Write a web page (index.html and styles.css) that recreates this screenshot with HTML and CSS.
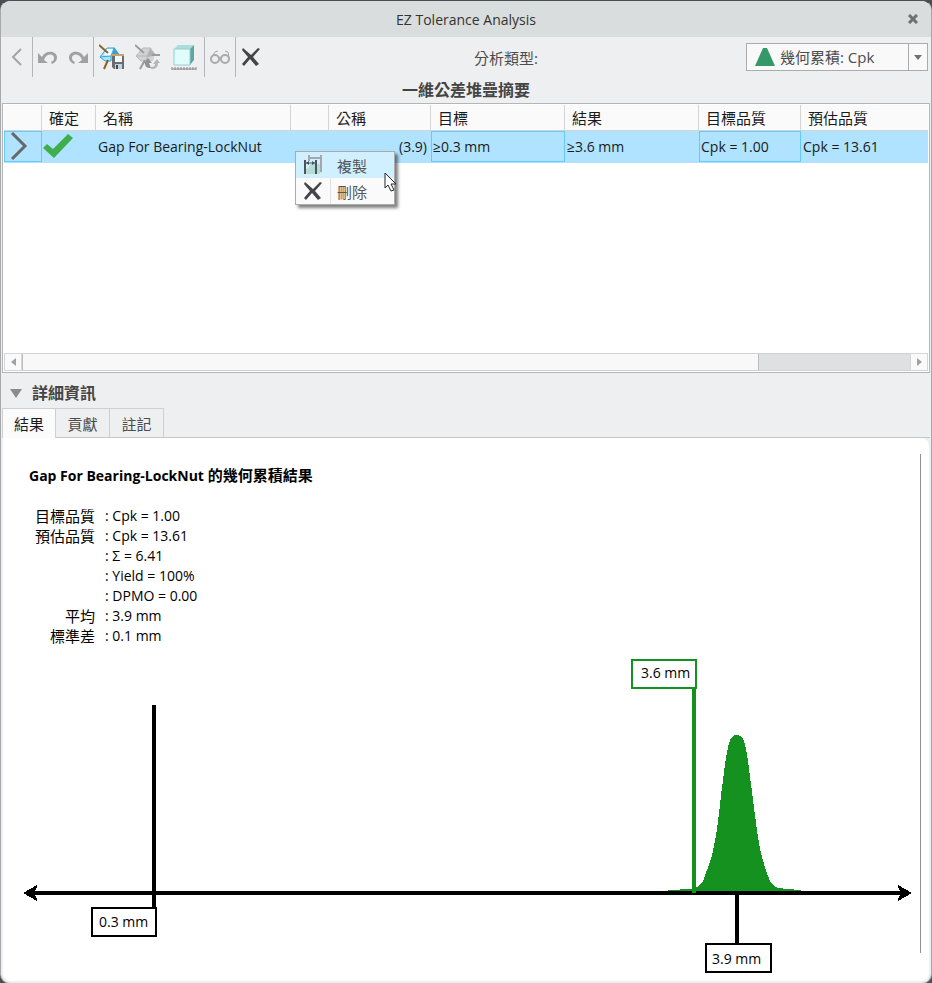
FILE: index.html
```html
<!DOCTYPE html>
<html lang="zh-Hant">

<head>
    <meta charset="UTF-8">
    <meta name="viewport" content="width=device-width, initial-scale=1.0">
    <title>EZ Tolerance Analysis</title>
    <link rel="stylesheet" href="styles.css">
</head>

<body>
    <div class="window">
        <header class="titlebar">
            <h1>EZ Tolerance Analysis</h1>
            <button type="button" class="close" aria-label="Close">
                <svg width="10" height="10" viewBox="0 0 10 10"><path d="M1 1L9 9M9 1L1 9" stroke="#6d6f73" stroke-width="3"/></svg>
            </button>
        </header>

        <!-- Toolbar -->
        <div class="toolbar">
            <div class="tools">
                <div class="group">
                    <button type="button" aria-label="Back">
                        <svg width="12" height="20" viewBox="0 0 12 20"><path d="M10 2L2 10L10 18" fill="none" stroke="#a3a4a6" stroke-width="2"/></svg>
                    </button>
                </div>
                <div class="group wide">
                    <button type="button" aria-label="Undo">
                        <svg width="20" height="16" viewBox="0 0 20 16"><path d="M0 4V14H10L6 11C8 4 16 4 16 9C16 11 15 12 13 13L14 15C18 13 19 11 19 8C18 1 7 1 4 8Z" fill="#a0a1a3"/></svg>
                    </button>
                    <button type="button" aria-label="Redo">
                        <svg width="20" height="16" viewBox="0 0 20 16"><path d="M20 4V14H10L14 11C12 4 4 4 4 9C4 11 5 12 7 13L6 15C2 13 1 11 1 8C2 1 13 1 16 8Z" fill="#a0a1a3"/></svg>
                    </button>
                </div>
                <div class="group models">
                    <button type="button" aria-label="Save model">
                        <svg width="26" height="26" viewBox="0 0 26 26">
                            <path d="M7 4H16L20 11L16 17H6L1 13Z" fill="#a8e6fc"/>
                            <path d="M15 3L21 11H16L13 13V10Z" fill="#3d9fd0"/>
                            <path d="M8 5H15L12 12L5 11Z" fill="#f6fdff"/>
                            <path d="M1 13L8 4H15L12 12L1 13L6 17H12V12" fill="none" stroke="#36a5da"/>
                            <path d="M0 1L9 9M9 16L5 25" stroke="#8a6229" stroke-width="2"/>
                            <path d="M13 11H25V25H15L13 23Z" fill="#6b6c72"/>
                            <path d="M13 11H25" stroke="#c8a06c" stroke-width="2"/>
                            <path d="M16 12H23V18H16Z" fill="#f6f6f6"/>
                            <path d="M16 20H23V25H16Z" fill="#bfd3dd"/>
                            <path d="M17 21H19V25H17Z" fill="#464950"/>
                        </svg>
                    </button>
                    <button type="button" aria-label="Update model">
                        <svg width="26" height="26" viewBox="0 0 26 26">
                            <path d="M8 4H16L20 10L18 17H6L1 12Z" fill="#d2d2d3"/>
                            <path d="M15 4L21 11L13 13L12 12Z" fill="#b1b1b3"/>
                            <path d="M1 12L8 4H16L12 12H1L6 17H12V12" fill="none" stroke="#b9b9ba"/>
                            <path d="M0 1L9 9M10 16L5 25M17 11H25" stroke="#9c9c9e" stroke-width="2"/>
                            <path d="M8 20L13 14L17 19H14L16 24C11 24 10 22 10 19Z" fill="#929295"/>
                            <path d="M16 25V23C19 23 20 22 20 20H18L22 15L25 19H23C23 23 21 25 16 25Z" fill="#b7b7b9"/>
                        </svg>
                    </button>
                    <button type="button" aria-label="Dimensions">
                        <svg width="26" height="26" viewBox="0 0 26 26">
                            <path d="M3 5L7 1H23L19 5Z" fill="#a8dfdc"/>
                            <path d="M19 5L23 1V16L19 21Z" fill="#5ba6a4"/>
                            <path d="M3 5H19V21H3Z" fill="#dffdfc" stroke="#98cdca"/>
                            <path d="M1 25H25M1 23V26M4 23V26M7 23V26M10 23V26M13 23V26M16 23V26M19 23V26M22 23V26M25 23V26" stroke="#85868a"/>
                        </svg>
                    </button>
                </div>
                <div class="group">
                    <button type="button" aria-label="Show details">
                        <svg width="20" height="14" viewBox="0 0 20 14" fill="none" stroke="#aaaaac"><circle cx="5" cy="9" r="4" stroke-width="2"/><circle cx="15" cy="9" r="4" stroke-width="2"/><path d="M9 8Q10 6 11 8M1 8L5 2L8 1M19 8L18 2L15 1" stroke-width="1"/></svg>
                    </button>
                </div>
                <div class="group">
                    <button type="button" aria-label="Delete">
                        <svg width="20" height="20" viewBox="0 0 20 20"><path d="M2 1L10 8L17 1L19 2L12 10L18 17L15 19L9 12L3 19L1 17L7 10L1 3Z" fill="#454547"/></svg>
                    </button>
                </div>
            </div>
            <label for="analysis">分析類型:</label>
            <div class="combo">
                <svg width="20" height="18" viewBox="0 0 20 18"><path d="M8 0H12L20 18H0Z" fill="#359967"/></svg>
                <select id="analysis">
                    <option>幾何累積: Cpk</option>
                </select>
                <span class="combo-arrow"></span>
            </div>
        </div>

        <h2 class="summary-title">一維公差堆疊摘要</h2>

        <!-- Stackup list -->
        <section class="stackups">
            <div class="table-area">
                <table>
                    <colgroup>
                        <col class="c-arrow">
                        <col class="c-ok">
                        <col class="c-name">
                        <col class="c-blank">
                        <col class="c-nominal">
                        <col class="c-value">
                        <col class="c-value">
                        <col class="c-quality">
                        <col>
                    </colgroup>
                    <thead>
                        <tr>
                            <th></th>
                            <th>確定</th>
                            <th>名稱</th>
                            <th></th>
                            <th>公稱</th>
                            <th>目標</th>
                            <th>結果</th>
                            <th>目標品質</th>
                            <th>預估品質</th>
                        </tr>
                    </thead>
                    <tbody>
                        <tr>
                            <td class="editable icon-cell"><svg width="18" height="28" viewBox="0 0 18 28"><path d="M2 1L15 14L2 27" fill="none" stroke="#66686b" stroke-width="3"/></svg></td>
                            <td class="icon-cell"><svg width="30" height="24" viewBox="0 0 30 24"><path d="M0 14L4 10L10 15L25 0L30 4L11 24Z" fill="#41ae4c"/></svg></td>
                            <td>Gap For Bearing-LockNut</td>
                            <td></td>
                            <td class="right">(3.9)</td>
                            <td class="editable">≥0.3 mm</td>
                            <td>≥3.6 mm</td>
                            <td class="editable">Cpk = 1.00</td>
                            <td>Cpk = 13.61</td>
                        </tr>
                    </tbody>
                </table>

                <div class="context-menu" role="menu">
                    <button type="button" role="menuitem" class="active">
                        <span class="menu-icon"><svg width="20" height="20" viewBox="0 0 20 20">
                            <path d="M5 13L8 9H19V16L16 19H2V15Z" fill="#b5dcd5"/>
                            <path d="M6 0V6M18 0V17M6 3H18" stroke="#a1a7ab" stroke-width="2" fill="none"/>
                            <path d="M2 5V19M13 5V19" stroke="#4c5459" stroke-width="2" fill="none"/>
                            <path d="M2 8H13" stroke="#4c5459" fill="none"/>
                            <path d="M3 8L6 6V10ZM12 8L9 6V10Z" fill="#4c5459"/>
                        </svg></span>
                        <span>複製</span>
                    </button>
                    <button type="button" role="menuitem">
                        <span class="menu-icon"><svg width="20" height="20" viewBox="0 0 20 20"><path d="M2 1L10 8L17 1L19 2L12 10L18 17L15 19L9 12L3 19L1 17L7 10L1 3Z" fill="#454547"/></svg></span>
                        <span>刪除</span>
                    </button>
                    <svg class="pointer" width="13" height="20" viewBox="0 0 13 20"><path d="M1 1V16L4 13L7 19L10 18L7 12H12Z" fill="#fff" stroke="#22262c"/></svg>
                </div>
            </div>
            <div class="scrollbar">
                <button type="button" aria-label="Scroll left"><svg width="5" height="8" viewBox="0 0 5 8"><path d="M5 0V8L0 4Z" fill="#a0a1a3"/></svg></button>
                <div class="track"><div class="thumb"></div></div>
                <button type="button" aria-label="Scroll right"><svg width="5" height="8" viewBox="0 0 5 8"><path d="M0 0V8L5 4Z" fill="#a0a1a3"/></svg></button>
            </div>
        </section>

        <!-- Details -->
        <h2 class="details-title">
            <svg width="12" height="9" viewBox="0 0 12 9"><path d="M0 0H12L6 9Z" fill="#8b8c8e"/></svg>
            詳細資訊
        </h2>
        <div class="tabs" role="tablist">
            <button type="button" role="tab" aria-selected="true" class="selected">結果</button>
            <button type="button" role="tab" aria-selected="false">貢獻</button>
            <button type="button" role="tab" aria-selected="false">註記</button>
        </div>

        <section class="panel">
            <div class="results">
                <h3><span>Gap For Bearing-LockNut</span> 的幾何累積結果</h3>
                <dl>
                    <dt>目標品質</dt><dd>: Cpk = 1.00</dd>
                    <dt>預估品質</dt><dd>: Cpk = 13.61</dd>
                    <dt></dt><dd>: Σ = 6.41</dd>
                    <dt></dt><dd>: Yield = 100%</dd>
                    <dt></dt><dd>: DPMO = 0.00</dd>
                    <dt>平均</dt><dd>: 3.9 mm</dd>
                    <dt>標準差</dt><dd>: 0.1 mm</dd>
                </dl>
                <svg class="chart" viewBox="0 0 890 316">
                    <g shape-rendering="crispEdges">
                        <!-- number line -->
                        <path d="M10 236H880" stroke="#000" stroke-width="4"/>
                        <path d="M0 236L14 228V230L11 236L14 242V244Z" fill="#000"/>
                        <path d="M889 236L875 228V230L878 236L875 242V244Z" fill="#000"/>
                        <!-- target -->
                        <path d="M131 48V250" stroke="#000" stroke-width="4"/>
                        <!-- distribution -->
                        <path d="M645 234V233L669 232C674 231 678 228 680 224C683 215 689 202 691 189C696 166 697 142 700 123C702 108 704 89 708 81C710 77 717 77 720 81C723 88 725 103 727 120C731 149 735 187 739 200C743 215 747 227 751 229C755 232 765 232 778 233V234Z" fill="#14911e"/>
                        <path d="M671 31V236" stroke="#14911e" stroke-width="4"/>
                        <path d="M714 238V287" stroke="#000" stroke-width="4"/>
                        <rect x="69" y="251" width="64" height="28" fill="#fff" stroke="#000" stroke-width="2"/>
                        <rect x="609" y="3" width="64" height="28" fill="#fff" stroke="#14911e" stroke-width="2"/>
                        <rect x="683" y="287" width="65" height="28" fill="#fff" stroke="#000" stroke-width="2"/>
                    </g>
                    <text x="76" y="270">0.3 mm</text>
                    <text x="618" y="21">3.6 mm</text>
                    <text x="689" y="307">3.9 mm</text>
                </svg>
            </div>
            <div class="scroll-line"></div>
        </section>
    </div>
</body>

</html>
```

FILE: styles.css
```css
* {
    box-sizing: border-box;
    margin: 0;
    padding: 0;
}

body {
    background-color: #4a4d52;
    font-family: "Open Sans", "Noto Sans CJK TC", sans-serif;
    font-size: 14px;
    color: #1b1b1b;
}

button {
    display: flex;
    align-items: center;
    justify-content: center;
    background: none;
    border: none;
    font: inherit;
    color: inherit;
    cursor: pointer;
}

svg {
    display: block;
    flex: none;
}

.window {
    display: flex;
    flex-direction: column;
    min-height: 100vh;
    padding: 0 2px 2px;
    background-color: #eeeff1;
    border: 1px solid #a6a8aa;
    border-top-color: #4a4d52;
    border-radius: 10px;
    overflow: hidden;
}

.titlebar {
    display: grid;
    grid-template-columns: 36px 1fr 36px;
    align-items: center;
    height: 36px;
    margin: 0 -2px;
    background-color: #d9dddd;
}

.titlebar h1 {
    grid-column: 2;
    font-size: 14px;
    font-weight: normal;
    text-align: center;
    color: #333;
}

.close {
    height: 36px;
}

/* Toolbar */
.toolbar {
    display: flex;
    justify-content: space-between;
    align-items: center;
    height: 40px;
    font-size: 15px;
    color: #4c4c4c;
}

.tools, .group {
    display: flex;
    height: 40px;
}

.group {
    align-items: center;
    padding: 0 5px;
}

.group:first-child {
    padding: 0 9px 0 8px;
}

.group + .group {
    border-left: 1px solid #b4b5b7;
}

.group.wide {
    gap: 10px;
}

.group.models {
    gap: 10px;
    padding: 0 7px 0 5px;
}

.combo {
    display: flex;
    align-items: center;
    position: relative;
    height: 28px;
    width: 182px;
    margin-right: 1px;
    padding-left: 8px;
    background-color: #f9f9f9;
    border: 1px solid #a9abad;
}

.combo select {
    flex: 1;
    height: 26px;
    padding-left: 5px;
    appearance: none;
    background: none;
    border: none;
    font: inherit;
    color: inherit;
}

.combo-arrow {
    position: absolute;
    right: 0;
    display: flex;
    align-items: center;
    justify-content: center;
    width: 19px;
    height: 26px;
    border-left: 1px solid #a9abad;
    pointer-events: none;
}

.combo-arrow::before {
    content: "";
    border: 4px solid transparent;
    border-top: 5px solid #707173;
    border-bottom: none;
}

h2 {
    font-size: 16px;
    line-height: 20px;
    color: #444;
}

.summary-title {
    padding: 3px 0;
    text-align: center;
}

/* Stackup list */
.stackups {
    margin: 0 -1px;
    padding: 1px;
    background-color: #fff;
    border: 1px solid #b4b5b7;
}

.table-area {
    position: relative;
    min-height: 248px;
}

table {
    width: 100%;
    table-layout: fixed;
    border-collapse: separate;
    border-spacing: 0;
}

.c-arrow { width: 38px; }
.c-ok { width: 54px; }
.c-name { width: 195px; }
.c-blank { width: 38px; }
.c-nominal { width: 102px; }
.c-value { width: 134px; }
.c-quality { width: 102px; }

th {
    height: 26px;
    padding: 0 7px;
    background-color: #fafafa;
    border-right: 1px solid #d2d4d5;
    border-bottom: 1px solid #d2d4d5;
    font-size: 15px;
    font-weight: normal;
    line-height: 20px;
    text-align: left;
}

th:last-child {
    border-right: none;
}

td {
    height: 32px;
    padding: 0 2px 2px;
    background-color: #afe3ff;
    white-space: nowrap;
}

/* the edit box ends above the bottom of the row */
td.editable {
    box-shadow: inset 0 -1px #afe3ff, inset 0 -2px #66c9fb, inset 0 0 0 1px #66c9fb;
}

td.icon-cell {
    padding-left: 1px;
}

td.editable.icon-cell {
    padding-left: 6px;
}

td.right {
    padding-right: 4px;
    text-align: right;
}

.context-menu {
    position: absolute;
    top: 46px;
    left: 291px;
    width: 100px;
    background-color: #fafafa;
    border: 1px solid #a9abad;
    box-shadow: 3px 3px 3px rgba(0, 0, 0, 0.5);
    color: #555;
    font-size: 15px;
}

.context-menu button {
    justify-content: flex-start;
    gap: 6px;
    width: 100%;
    height: 26px;
}

.context-menu button.active {
    background-color: #d0f0ff;
}

.menu-icon {
    display: flex;
    align-items: center;
    justify-content: center;
    width: 35px;
    height: 26px;
    border-right: 1px solid #e0e0e0;
}

.active .menu-icon {
    border-color: transparent;
}

.pointer {
    position: absolute;
    top: 20px;
    left: 88px;
}

.scrollbar {
    display: flex;
    height: 18px;
}

.scrollbar button {
    width: 18px;
    background-color: #fafafa;
    border: 1px solid #d5d6d7;
}

.track {
    flex: 1;
    background-color: #dfe0e1;
    border-top: 1px solid #d0d1d2;
    border-bottom: 1px solid #d0d1d2;
}

.thumb {
    width: 83%;
    height: 100%;
    background-color: #f8f8f8;
    border: 1px solid #bcbdbf;
    border-width: 0 1px;
}

/* Details */
.details-title {
    display: flex;
    align-items: center;
    gap: 10px;
    padding: 10px 7px 5px;
}

.tabs {
    display: flex;
    margin: 0 -1px;
    border-bottom: 1px solid #c4c6c8;
}

.tabs button {
    width: 54px;
    height: 29px;
    border: 1px solid #cdcfd1;
    border-width: 1px 1px 0 0;
    color: #4c4c4c;
    font-size: 15px;
}

.tabs button.selected {
    height: 30px;
    margin-bottom: -1px;
    background-color: #fbfbfb;
    border-left-width: 1px;
    color: #1b1b1b;
}

.panel {
    display: flex;
    flex: 1;
    gap: 7px;
    padding: 16px 8px 8px 20px;
    background-color: #fff;
    border-radius: 0 8px 8px 8px;
    color: #000;
}

.results {
    flex: 1;
}

.results h3 {
    padding: 11px 0 20px 6px;
    font-size: 15px;
    line-height: 20px;
}

.results h3 span {
    font-size: 14px;
}

dl {
    display: grid;
    grid-template-columns: 72px 1fr;
    grid-auto-rows: 20px;
    column-gap: 10px;
    line-height: 20px;
}

dt {
    font-size: 15px;
    text-align: right;
}

.chart {
    width: 100%;
    margin-top: 11px;
}

.chart text {
    font-size: 14px;
}

.scroll-line {
    width: 1px;
    margin-bottom: 20px;
    background-color: #8f9193;
}
```
